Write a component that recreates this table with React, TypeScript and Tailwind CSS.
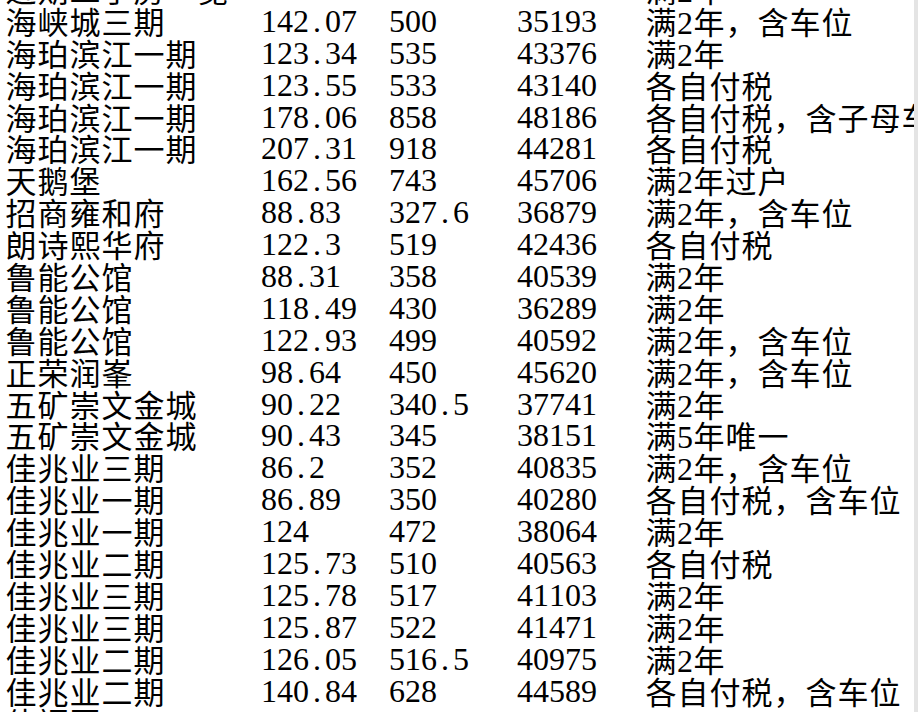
import React from "react";

const rows: string[][] = [
  ["近期二手房一览", "", "", "", "满2年"],
  ["海峡城三期", "142.07", "500", "35193", "满2年，含车位"],
  ["海珀滨江一期", "123.34", "535", "43376", "满2年"],
  ["海珀滨江一期", "123.55", "533", "43140", "各自付税"],
  ["海珀滨江一期", "178.06", "858", "48186", "各自付税，含子母车位"],
  ["海珀滨江一期", "207.31", "918", "44281", "各自付税"],
  ["天鹅堡", "162.56", "743", "45706", "满2年过户"],
  ["招商雍和府", "88.83", "327.6", "36879", "满2年，含车位"],
  ["朗诗熙华府", "122.3", "519", "42436", "各自付税"],
  ["鲁能公馆", "88.31", "358", "40539", "满2年"],
  ["鲁能公馆", "118.49", "430", "36289", "满2年"],
  ["鲁能公馆", "122.93", "499", "40592", "满2年，含车位"],
  ["正荣润峯", "98.64", "450", "45620", "满2年，含车位"],
  ["五矿崇文金城", "90.22", "340.5", "37741", "满2年"],
  ["五矿崇文金城", "90.43", "345", "38151", "满5年唯一"],
  ["佳兆业三期", "86.2", "352", "40835", "满2年，含车位"],
  ["佳兆业一期", "86.89", "350", "40280", "各自付税，含车位"],
  ["佳兆业一期", "124", "472", "38064", "满2年"],
  ["佳兆业二期", "125.73", "510", "40563", "各自付税"],
  ["佳兆业三期", "125.78", "517", "41103", "满2年"],
  ["佳兆业三期", "125.87", "522", "41471", "满2年"],
  ["佳兆业二期", "126.05", "516.5", "40975", "满2年"],
  ["佳兆业二期", "140.84", "628", "44589", "各自付税，含车位"],
  ["佳福园", "", "", "", ""],
];

function Txt({ text }: { text: string }) {
  return (
    <>
      {Array.from(text).map((ch, i) =>
        ch.charCodeAt(0) < 128 ? (
          <span
            key={i}
            className="inline-block w-[16px] text-center text-[32px] leading-[32px] font-['Liberation_Serif',serif]"
          >
            {ch}
          </span>
        ) : (
          <span
            key={i}
            className="inline-block w-[32px] text-center text-[31px] leading-[32px] font-['Noto_Sans_CJK_SC',sans-serif]"
          >
            {ch}
          </span>
        )
      )}
    </>
  );
}

export default function App() {
  return (
    <div className="w-[918px] h-[712px] overflow-hidden bg-white flex text-black">
      <div className="flex-1 min-w-0 overflow-hidden pl-[5px] -mt-[27px] flex flex-col">
        {rows.map((r, i) => (
          <div
            key={i}
            className="grid grid-cols-[256px_128px_128px_128px_1fr] h-[31.9px] shrink-0 whitespace-nowrap"
          >
            {r.map((c, j) => (
              <div key={j} className="h-[32px] leading-[32px] whitespace-nowrap">
                <Txt text={c} />
              </div>
            ))}
          </div>
        ))}
      </div>
      <div className="w-[4px] bg-[#e4e4e4]" />
    </div>
  );
}
